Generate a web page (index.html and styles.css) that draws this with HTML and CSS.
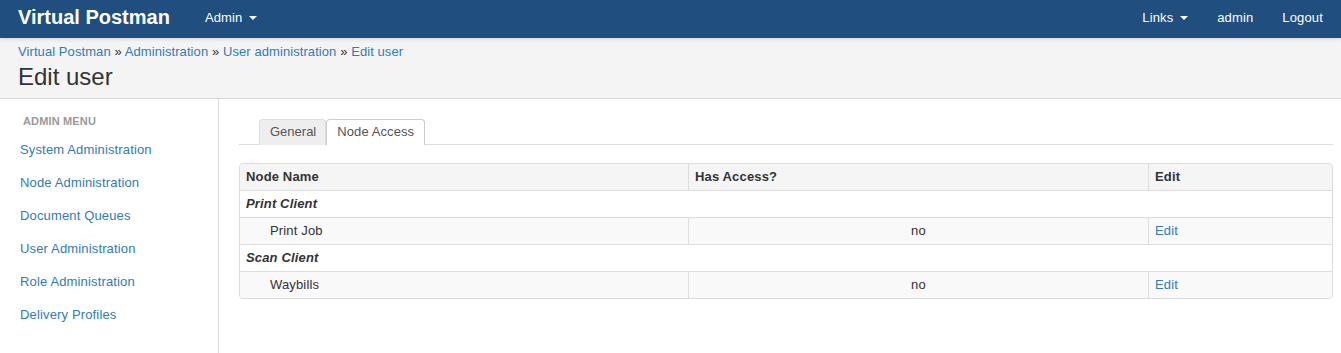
FILE: index.html
```html
<!DOCTYPE html>
<html lang="en">

<head>
    <meta charset="utf-8">
    <meta name="viewport" content="width=device-width, initial-scale=1.0">
    <title>Virtual Postman - Edit user</title>
    <link rel="stylesheet" href="styles.css">
</head>

<body>
    <nav class="topbar">
        <a class="brand" href="#">Virtual Postman</a>
        <a class="topbar_link" href="#">Admin <span class="caret"></span></a>
        <div class="topbar_right">
            <a class="topbar_link" href="#">Links <span class="caret"></span></a>
            <a class="topbar_link" href="#">admin</a>
            <a class="topbar_link" href="#">Logout</a>
        </div>
    </nav>

    <header class="page_head">
        <div class="crumbs">
            <a href="#">Virtual Postman</a> &raquo; <a href="#">Administration</a> &raquo;
            <a href="#">User administration</a> &raquo; <a href="#">Edit user</a>
        </div>
        <h1>Edit user</h1>
    </header>

    <div class="layout">
        <aside class="sidebar">
            <h4>Admin menu</h4>
            <a href="#">System Administration</a>
            <a href="#">Node Administration</a>
            <a href="#">Document Queues</a>
            <a href="#">User Administration</a>
            <a href="#">Role Administration</a>
            <a href="#">Delivery Profiles</a>
        </aside>

        <main class="main">
            <ul class="tabs">
                <li class="tab">General</li>
                <li class="tab tab_active">Node Access</li>
            </ul>

            <table class="access">
                <thead>
                    <tr>
                        <th class="col_name">Node Name</th>
                        <th class="col_access">Has Access?</th>
                        <th>Edit</th>
                    </tr>
                </thead>
                <tbody>
                    <tr class="group">
                        <td colspan="3">Print Client</td>
                    </tr>
                    <tr class="node">
                        <td class="node_name">Print Job</td>
                        <td class="node_access">no</td>
                        <td><a href="#">Edit</a></td>
                    </tr>
                    <tr class="group">
                        <td colspan="3">Scan Client</td>
                    </tr>
                    <tr class="node">
                        <td class="node_name">Waybills</td>
                        <td class="node_access">no</td>
                        <td><a href="#">Edit</a></td>
                    </tr>
                </tbody>
            </table>
        </main>
    </div>
</body>

</html>
```

FILE: styles.css
```css
* {
    box-sizing: border-box;
    margin: 0;
    padding: 0;
}

body {
    font-family: 'Liberation Sans', Arial, sans-serif;
    font-size: 13px;
    letter-spacing: 0.15px;
    color: #333;
    background: #fff;
}

a {
    color: #337ab7;
    text-decoration: none;
}

/* top navigation */

.topbar {
    display: flex;
    align-items: center;
    height: 38px;
    background-color: #1f4e7f;
    padding: 0 18px 4px 18px;
    position: relative;
    z-index: 2;
    box-shadow: 0 1px 4px rgba(0, 0, 0, 0.15);
}

.brand {
    color: #fff;
    font-size: 20px;
    font-weight: bold;
    letter-spacing: 0;
    margin-right: 35px;
}

.topbar_link {
    color: #fff;
    font-size: 13px;
}

.topbar_right {
    display: flex;
    margin-left: auto;
    gap: 29px;
}

.caret {
    display: inline-block;
    width: 0;
    height: 0;
    margin-left: 3px;
    vertical-align: middle;
    border-top: 4px solid #fff;
    border-left: 4px solid transparent;
    border-right: 4px solid transparent;
}

/* page header */

.page_head {
    background-color: #f4f4f4;
    border-bottom: 1px solid #d5d5d5;
    padding: 6px 18px 8px 18px;
    height: 61px;
}

.crumbs {
    line-height: 16px;
    letter-spacing: 0.08px;
    color: #333;
}

.page_head h1 {
    font-size: 24px;
    font-weight: normal;
    letter-spacing: 0;
    line-height: 26px;
    margin-top: 4px;
    color: #333;
}

/* sidebar */

.layout {
    display: flex;
}

.sidebar {
    width: 219px;
    min-height: 254px;
    border-right: 1px solid #ddd;
    padding-top: 15px;
    display: flex;
    flex-direction: column;
}

.sidebar h4 {
    font-size: 11px;
    font-weight: bold;
    text-transform: uppercase;
    color: #999;
    line-height: 14px;
    padding-left: 23px;
    margin-bottom: 5px;
}

.sidebar a {
    line-height: 17px;
    padding: 8px 20px;
}

/* main content */

.main {
    flex: 1;
    padding: 20px 8px 0 20px;
}

.tabs {
    list-style: none;
    display: flex;
    padding-left: 20px;
    border-bottom: 1px solid #ddd;
}

.tab {
    line-height: 16px;
    padding: 4px 10px;
    border: 1px solid #ddd;
    border-bottom: none;
    border-radius: 4px 4px 0 0;
    background-color: #eee;
    color: #555;
    margin-bottom: -1px;
    height: 26px;
    letter-spacing: 0;
}

.tab:first-child {
    padding: 4px 9px 4px 10px;
}

.tab_active {
    background-color: #fff;
    color: #555;
    border-color: #ccc;
    letter-spacing: 0.1px;
}

.access {
    width: 100%;
    margin-top: 18px;
    border: 1px solid #ddd;
    border-radius: 4px;
    border-spacing: 0;
    border-collapse: separate;
}

.access th,
.access td {
    text-align: left;
    line-height: 16px;
    padding: 5px 6px;
    border-top: 1px solid #ddd;
}

.access thead th {
    border-top: none;
    background-color: #f5f5f5;
    font-weight: bold;
    color: #333;
}

.access thead th:first-child {
    border-top-left-radius: 4px;
}

.access thead th:last-child {
    border-top-right-radius: 4px;
}

.access th + th,
.access .node td + td {
    border-left: 1px solid #ddd;
}

.col_name {
    width: 448px;
}

.col_access {
    width: 460px;
}

.group td {
    font-weight: bold;
    font-style: italic;
    background-color: #fff;
}

.node td {
    background-color: #f9f9f9;
}

.node_name {
    padding-left: 30px !important;
}

.node_access {
    text-align: center !important;
}

.access tr:last-child td:first-child {
    border-bottom-left-radius: 4px;
}

.access tr:last-child td:last-child {
    border-bottom-right-radius: 4px;
}
```
